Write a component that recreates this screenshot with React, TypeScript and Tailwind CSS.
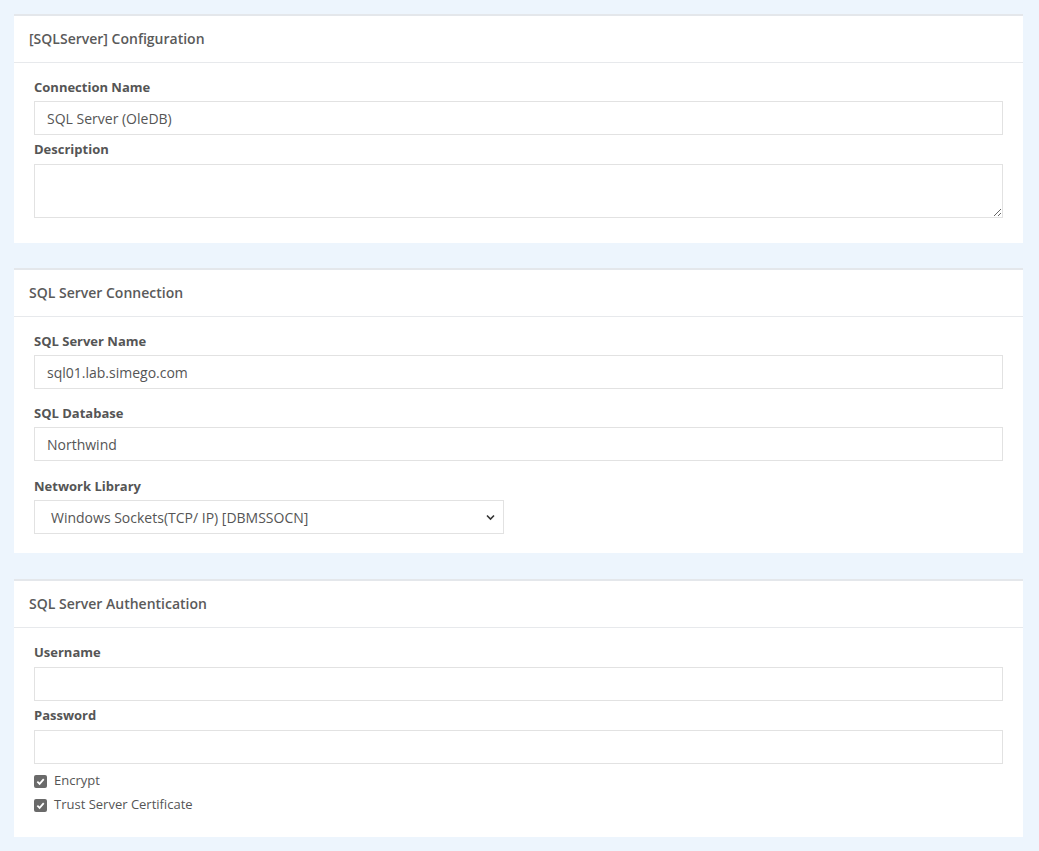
import React from "react";

function Card({ title, children, pb = "pb-5", mt = "" }: { title: string; children: React.ReactNode; pb?: string; mt?: string }) {
  return (
    <div className={`bg-white border-t-2 border-[#e4e7eb] ${mt}`}>
      <div className="h-[47px] flex items-center pb-[2px] px-[15px] border-b border-[#e7e9ec] text-[14px] font-semibold text-[#5a5a5a]">
        {title}
      </div>
      <div className={`flex flex-col px-5 pt-[15px] ${pb}`}>{children}</div>
    </div>
  );
}

function Label({ children }: { children: React.ReactNode }) {
  return <div className="text-[13px] leading-[18px] font-bold text-[#555] mb-[5px]">{children}</div>;
}

function Input({ value = "" }: { value?: string }) {
  return (
    <input
      readOnly
      value={value}
      className="block w-full h-[34px] border border-[#e2e2e2] px-3 text-[14px] text-[#555] outline-none bg-white"
    />
  );
}

function Check({ label }: { label: string }) {
  return (
    <label className="flex items-center gap-[7px] h-[24px] text-[13px] text-[#555]">
      <span className="w-[13px] h-[13px] rounded-[2px] bg-[#6a6a6a] flex items-center justify-center">
        <svg width="9" height="9" viewBox="0 0 10 10">
          <path d="M1.5 5.2 L4 7.6 L8.6 2.4" stroke="white" strokeWidth="2" fill="none" />
        </svg>
      </span>
      {label}
    </label>
  );
}

export default function App() {
  return (
    <div
      className="min-h-[851px] bg-[#edf5fd] pl-[14px] pr-[16px] pt-[14px] pb-[14px] flex flex-col"
      style={{ fontFamily: '"Open Sans", sans-serif' }}
    >
      <Card title="[SQLServer] Configuration" pb="pb-[20px]">
        <Label>Connection Name</Label>
        <Input value="SQL Server (OleDB)" />
        <div className="mt-[5px]">
          <Label>Description</Label>
        </div>
        <textarea
          readOnly
          className="block w-full h-[54px] mt-[1px] border border-[#e2e2e2] px-3 py-1 text-[14px] text-[#555] outline-none"
        />
        <div className="h-[5px]" />
      </Card>
      <Card title="SQL Server Connection" pb="pb-[19px]" mt="mt-[25px]">
        <Label>SQL Server Name</Label>
        <Input value="sql01.lab.simego.com" />
        <div className="mt-[15px]">
          <Label>SQL Database</Label>
        </div>
        <Input value="Northwind" />
        <div className="mt-[16px]">
          <Label>Network Library</Label>
        </div>
        <div className="relative w-[470px] h-[34px] border border-[#e2e2e2] flex items-center pl-4 text-[14px] text-[#555]">
          Windows Sockets(TCP/ IP) [DBMSSOCN]
          <svg className="absolute right-[8px] top-[13px]" width="9" height="7" viewBox="0 0 9 7">
            <path d="M1 1.5 L4.5 5 L8 1.5" stroke="#333" strokeWidth="1.6" fill="none" />
          </svg>
        </div>
      </Card>
      <Card title="SQL Server Authentication" pb="pb-[20px]" mt="mt-[26px]">
        <Label>Username</Label>
        <div className="mt-[1px]">
          <Input />
        </div>
        <div className="mt-[5px]">
          <Label>Password</Label>
        </div>
        <div className="mt-[1px]">
          <Input />
        </div>
        <div className="mt-[5px]">
          <Check label="Encrypt" />
          <Check label="Trust Server Certificate" />
        </div>
      </Card>
    </div>
  );
}
